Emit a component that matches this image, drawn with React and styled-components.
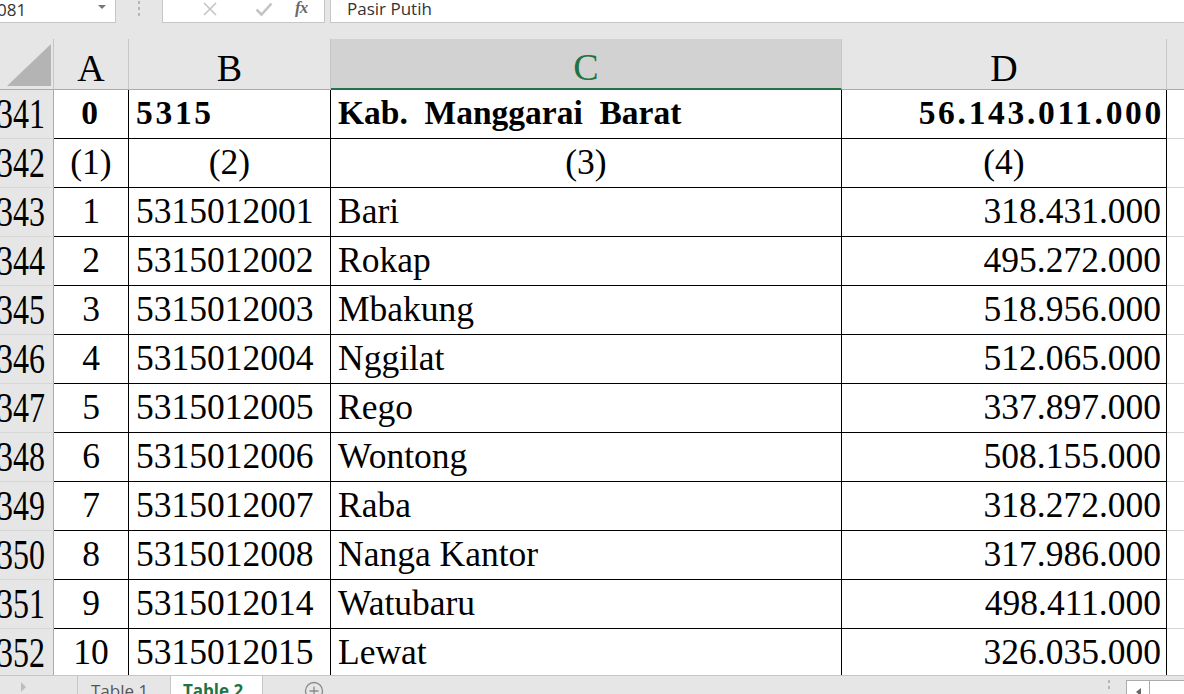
import React from "react";
import styled, { createGlobalStyle, css } from "styled-components";

const Global = createGlobalStyle`
  html, body { margin: 0; padding: 0; }
  body { width: 1184px; height: 694px; overflow: hidden; background: #e6e6e6; }
  * { box-sizing: border-box; }
`;

const Window = styled.div`
  width: 1184px;
  height: 694px;
  display: flex;
  flex-direction: column;
  background: #e6e6e6;
  overflow: hidden;
`;

const FormulaBar = styled.div`
  height: 23px;
  display: flex;
  align-items: stretch;
  font-family: "Open Sans", "Noto Sans", sans-serif;
`;

const NameBox = styled.div`
  width: 116px;
  background: #fff;
  border-right: 1px solid #c6c6c6;
  border-bottom: 1px solid #c6c6c6;
  position: relative;
  display: flex;
  align-items: center;
  font-size: 17px;
  color: #333;
  overflow: hidden;
  span { margin-left: -3px; margin-top: -4px; }
`;

const DropArrow = styled.div`
  position: absolute;
  left: 98px;
  top: 5px;
  width: 0;
  height: 0;
  border-left: 4px solid transparent;
  border-right: 4px solid transparent;
  border-top: 4px solid #777;
`;

const Grip = styled.div`
  width: 46px;
  display: flex;
  flex-direction: column;
  align-items: center;
  gap: 3px;
  padding-top: 1px;
  i {
    display: block;
    width: 2px;
    height: 3px;
    background: #b5b5b5;
  }
`;

const ButtonBox = styled.div`
  width: 163px;
  background: #fff;
  border: 1px solid #c6c6c6;
  border-top: none;
  display: flex;
  align-items: center;
  padding-left: 20px;
`;

const IconSlot = styled.div`
  width: 54px;
  display: flex;
  justify-content: center;
  margin-top: -4px;
`;

const Fx = styled.div`
  font-family: "Liberation Serif", serif;
  font-style: italic;
  font-weight: bold;
  font-size: 17px;
  color: #6a6a6a;
  margin-left: 4px;
  margin-top: -6px;
  letter-spacing: -1px;
`;

const FormulaInput = styled.div`
  flex: 1;
  margin-left: 5px;
  background: #fff;
  border-left: 1px solid #c6c6c6;
  border-bottom: 1px solid #c6c6c6;
  padding-left: 16px;
  font-size: 17px;
  color: #333;
  line-height: 18px;
`;

const Sheet = styled.div`
  margin-top: 16px;
  flex: 1;
  overflow: hidden;
  display: grid;
  grid-template-columns: 54px 75px 202px 511px 325px 1fr;
  grid-auto-rows: 49px;
  grid-template-rows: 51px;
  align-content: start;
  background: #fff;
`;

const Corner = styled.div`
  background: #e6e6e6;
  border-right: 1px solid #c6c6c6;
  border-bottom: 1px solid #ababab;
  display: flex;
  align-items: flex-end;
  justify-content: flex-end;
  padding: 0 2px 3px 0;
`;

const ColHeader = styled.div`
  background: #e6e6e6;
  border-right: 1px solid #c6c6c6;
  border-bottom: 1px solid #ababab;
  display: flex;
  justify-content: center;
  align-items: center;
  padding-top: 7px;
  font-family: "Liberation Serif", serif;
  font-size: 38px;
  color: #000;
  ${(p) =>
    p.$selected &&
    css`
      background: #d2d2d2;
      border-bottom: 2px solid #217346;
      color: #217346;
      padding-top: 6px;
    `}
`;

const RowHeader = styled.div`
  background: #e6e6e6;
  border-right: 1px solid #ababab;
  border-bottom: 1px solid #d6d6d6;
  display: flex;
  justify-content: flex-end;
  align-items: center;
  padding-right: 8px;
  overflow: hidden;
  font-family: "Liberation Serif", serif;
  font-size: 32px;
  color: #000;
  span {
    display: block;
    transform: scaleY(1.3);
    white-space: nowrap;
  }
`;

const Cell = styled.div`
  border-right: 1px solid #000;
  border-bottom: 1px solid #000;
  display: flex;
  align-items: center;
  padding: 0 7px 2px 7px;
  overflow: hidden;
  white-space: pre;
  font-family: "Liberation Serif", serif;
  font-size: 35.5px;
  color: #000;
  justify-content: ${(p) =>
    p.$align === "center" ? "center" : p.$align === "right" ? "flex-end" : "flex-start"};
  ${(p) => p.$align === "right" && css`padding-right: 5px;`}
  ${(p) =>
    p.$bold &&
    css`
      font-weight: bold;
      font-size: 33.5px;
    `}
  ${(p) =>
    p.$bold &&
    p.$numeric &&
    css`
      letter-spacing: 2.7px;
    `}
  ${(p) =>
    p.$bold &&
    p.$numeric &&
    p.$align === "right" &&
    css`
      padding-right: 2px;
    `}
`;

const EmptyCell = styled.div`
  border-bottom: 1px solid #d4d4d4;
  background: #fff;
`;

const EmptyHeader = styled.div`
  background: #e6e6e6;
  border-bottom: 1px solid #ababab;
`;

const TabBar = styled.div`
  height: 19px;
  border-top: 1px solid #c6c6c6;
  background: #e6e6e6;
  display: flex;
  align-items: stretch;
  font-family: "Open Sans", "Noto Sans", sans-serif;
  overflow: hidden;
`;

const NavArrow = styled.div`
  width: 77px;
  padding: 6px 0 0 21px;
  i {
    display: block;
    width: 0;
    height: 0;
    border-top: 5px solid transparent;
    border-bottom: 5px solid transparent;
    border-left: 5px solid #bdbdbd;
  }
`;

const Tab = styled.div`
  width: 93px;
  border-left: 1px solid #c6c6c6;
  padding: 0 0 0 13px;
  font-size: 17px;
  line-height: 29px;
  color: #555;
  white-space: nowrap;
  ${(p) =>
    p.$active &&
    css`
      background: #fff;
      color: #217346;
      font-weight: bold;
      border-right: 1px solid #c6c6c6;
      margin-top: -1px;
      padding-left: 12px;
      line-height: 31px;
    `}
`;

const AddTab = styled.div`
  margin-left: 41px;
  padding-top: 5px;
`;

const Spacer = styled.div`
  flex: 1;
`;

const TabGrip = styled.div`
  width: 20px;
  display: flex;
  flex-direction: column;
  align-items: center;
  gap: 3px;
  padding-top: 4px;
  i {
    display: block;
    width: 2px;
    height: 3px;
    background: #b5b5b5;
  }
`;

const ScrollBtn = styled.div`
  width: 24px;
  margin-left: 7px;
  margin-top: 4px;
  background: #fff;
  border: 1px solid #ababab;
  border-bottom: none;
  display: flex;
  justify-content: center;
  padding-top: 7px;
  i {
    display: block;
    width: 0;
    height: 0;
    border-top: 4px solid transparent;
    border-bottom: 4px solid transparent;
    border-right: 5px solid #666;
  }
`;

const ScrollTrack = styled.div`
  width: 34px;
  margin-top: 4px;
  background: #fff;
  border-top: 1px solid #ababab;
`;

const rows = [
  { n: 341, a: "0", b: "5315", c: "Kab.  Manggarai  Barat", d: "56.143.011.000", bold: true },
  { n: 342, a: "(1)", b: "(2)", c: "(3)", d: "(4)", center: true },
  { n: 343, a: "1", b: "5315012001", c: "Bari", d: "318.431.000" },
  { n: 344, a: "2", b: "5315012002", c: "Rokap", d: "495.272.000" },
  { n: 345, a: "3", b: "5315012003", c: "Mbakung", d: "518.956.000" },
  { n: 346, a: "4", b: "5315012004", c: "Nggilat", d: "512.065.000" },
  { n: 347, a: "5", b: "5315012005", c: "Rego", d: "337.897.000" },
  { n: 348, a: "6", b: "5315012006", c: "Wontong", d: "508.155.000" },
  { n: 349, a: "7", b: "5315012007", c: "Raba", d: "318.272.000" },
  { n: 350, a: "8", b: "5315012008", c: "Nanga Kantor", d: "317.986.000" },
  { n: 351, a: "9", b: "5315012014", c: "Watubaru", d: "498.411.000" },
  { n: 352, a: "10", b: "5315012015", c: "Lewat", d: "326.035.000" },
];

export default function App() {
  return (
    <Window>
      <Global />
      <FormulaBar>
        <NameBox>
          <span>081</span>
          <DropArrow />
        </NameBox>
        <Grip>
          <i />
          <i />
          <i />
        </Grip>
        <ButtonBox>
          <IconSlot>
            <svg width="16" height="16" viewBox="0 0 16 16">
              <path d="M2 2 L14 14 M14 2 L2 14" stroke="#c4c4c4" strokeWidth="1.6" fill="none" />
            </svg>
          </IconSlot>
          <IconSlot>
            <svg width="18" height="16" viewBox="0 0 18 16">
              <path d="M1.5 8.5 L6.5 13.5 L16.5 2.5" stroke="#c4c4c4" strokeWidth="2.6" fill="none" />
            </svg>
          </IconSlot>
          <Fx>fx</Fx>
        </ButtonBox>
        <FormulaInput>Pasir Putih</FormulaInput>
      </FormulaBar>

      <Sheet>
        <Corner>
          <svg width="44" height="42" viewBox="0 0 44 42">
            <polygon points="0,42 44,42 44,0" fill="#b4b4b4" />
          </svg>
        </Corner>
        <ColHeader>A</ColHeader>
        <ColHeader>B</ColHeader>
        <ColHeader $selected>C</ColHeader>
        <ColHeader>D</ColHeader>
        <EmptyHeader />
        {rows.map((r) => (
          <React.Fragment key={r.n}>
            <RowHeader>
              <span>{r.n}</span>
            </RowHeader>
            <Cell $align="center" $bold={r.bold} $numeric>{r.a}</Cell>
            <Cell $align={r.center ? "center" : "left"} $bold={r.bold} $numeric>{r.b}</Cell>
            <Cell $align={r.center ? "center" : "left"} $bold={r.bold}>{r.c}</Cell>
            <Cell $align={r.center ? "center" : "right"} $bold={r.bold} $numeric>{r.d}</Cell>
            <EmptyCell />
          </React.Fragment>
        ))}
      </Sheet>

      <TabBar>
        <NavArrow>
          <i />
        </NavArrow>
        <Tab>Table 1</Tab>
        <Tab $active>Table 2</Tab>
        <AddTab>
          <svg width="20" height="20" viewBox="0 0 20 20">
            <circle cx="10" cy="10" r="8.5" stroke="#8a8a8a" strokeWidth="1.3" fill="none" />
            <path d="M10 5.5 V14.5 M5.5 10 H14.5" stroke="#8a8a8a" strokeWidth="1.3" />
          </svg>
        </AddTab>
        <Spacer />
        <TabGrip>
          <i />
          <i />
        </TabGrip>
        <ScrollBtn>
          <i />
        </ScrollBtn>
        <ScrollTrack />
      </TabBar>
    </Window>
  );
}
